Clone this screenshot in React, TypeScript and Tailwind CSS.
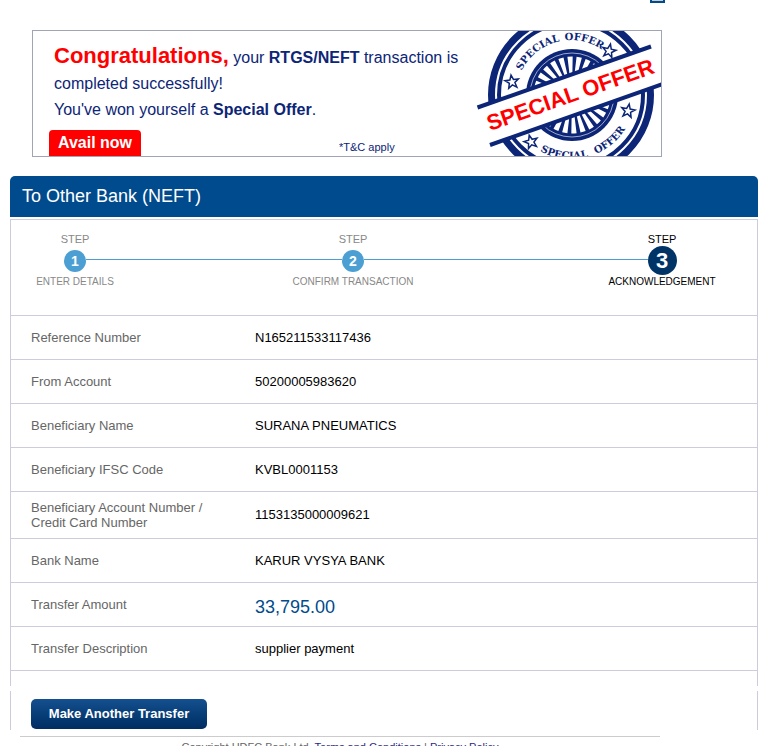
const details = [
  { label: 'Reference Number', value: 'N165211533117436' },
  { label: 'From Account', value: '50200005983620' },
  { label: 'Beneficiary Name', value: 'SURANA PNEUMATICS' },
  { label: 'Beneficiary IFSC Code', value: 'KVBL0001153' },
  { label: 'Beneficiary Account Number / Credit Card Number', value: '1153135000009621', tall: true },
  { label: 'Bank Name', value: 'KARUR VYSYA BANK' },
  { label: 'Transfer Amount', value: '33,795.00', amount: true },
  { label: 'Transfer Description', value: 'supplier payment' },
];

const steps = [
  { number: 1, label: 'ENTER DETAILS' },
  { number: 2, label: 'CONFIRM TRANSACTION' },
  { number: 3, label: 'ACKNOWLEDGEMENT' },
];

const starPoints = '0,-7 1.8,-2.3 6.7,-2.2 2.8,0.9 4.1,5.7 0,2.9 -4.1,5.7 -2.8,0.9 -6.7,-2.2 -1.8,-2.3';

function SpecialOfferStamp() {
  return (
    <svg viewBox="475 31 186 125" className="h-[125px] w-[186px] shrink-0" role="img" aria-label="Special offer stamp">
      <defs>
        <path id="arcTop" d="M 516 95 A 55 55 0 0 1 626 95" />
        <path id="arcBottom" d="M 507 95 A 64 64 0 0 0 635 95" />
      </defs>
      <g fill="none" stroke="#0c2577">
        <circle cx="571" cy="95" r="79.5" strokeWidth="7" />
        <circle cx="571" cy="95" r="72" strokeWidth="4" />
      </g>
      <circle cx="572" cy="95" r="46" fill="#0c2577" />
      <circle cx="572" cy="95" r="42" fill="none" stroke="#fff" strokeWidth="0.6" />
      <circle cx="572" cy="95" r="28" fill="none" stroke="#fff" strokeWidth="21" pathLength="52" strokeDasharray="1.15 0.85" />
      <g fill="#0c2577" fontFamily="'DejaVu Serif', serif" fontWeight="bold" fontSize="10">
        <text>
          <textPath href="#arcTop" startOffset="25">SPECIAL</textPath>
        </text>
        <text>
          <textPath href="#arcTop" startOffset="80">OFFER</textPath>
        </text>
        <text>
          <textPath href="#arcBottom" startOffset="68">SPECIAL</textPath>
        </text>
        <text>
          <textPath href="#arcBottom" startOffset="126">OFFER</textPath>
        </text>
      </g>
      <g fill="#fff" stroke="#0c2577" strokeWidth="1.5">
        <polygon points={starPoints} transform="translate(512 82) rotate(-8)" />
        <polygon points={starPoints} transform="translate(609 51) rotate(12)" />
        <polygon points={starPoints} transform="translate(531 142) rotate(-15)" />
        <polygon points={starPoints} transform="translate(628 111) rotate(10)" />
      </g>
      <polygon points="477,107.5 651,46.5 663,47 663,84 490,145" fill="#fff" />
      <g stroke="#0c2577" strokeWidth="4">
        <line x1="477.5" y1="107.5" x2="651" y2="46.5" />
        <line x1="490" y1="145" x2="663" y2="84" />
      </g>
      <text
        transform="translate(490 131) rotate(-19.4)"
        fill="#f00"
        fontFamily="'Liberation Sans', Arial, sans-serif"
        fontWeight="bold"
        fontSize="22"
      >
        SPECIAL OFFER
      </text>
    </svg>
  );
}

function OfferBanner() {
  return (
    <section className="ml-[22px] flex h-[127px] w-[630px] justify-between overflow-hidden border border-[#a0a4b4] text-[#0c2577]">
      <div className="flex flex-col">
        <p className="mt-3 ml-[21px] text-base leading-[26px] whitespace-nowrap">
          <strong className="text-[22px] text-[#f00]">Congratulations,</strong> your <strong>RTGS/NEFT</strong> transaction is
          <br />
          completed successfully!
          <br />
          You've won yourself a <strong>Special Offer</strong>.
        </p>
        <div className="mt-auto flex items-start">
          <button type="button" className="ml-4 h-[26px] w-[92px] rounded-t-[4px] bg-[#f00] text-base font-bold text-white">
            Avail now
          </button>
          <span className="ml-[198px] pt-2 text-[11px] leading-[18px]">*T&amp;C apply</span>
        </div>
      </div>
      <SpecialOfferStamp />
    </section>
  );
}

function StepTracker() {
  return (
    <ol className="grid h-[95px] grid-cols-[128px_1fr_190px] pt-[13px] text-center text-[#888]">
      {steps.map((step, i) => {
        const current = step.number === 3;
        return (
          <li key={step.number} className={current ? 'text-black' : ''}>
            <div className="h-[13px] text-[11px] leading-3">STEP</div>
            <div className="flex h-[30px]">
              <span className={`mt-[13px] h-px flex-1 ${i > 0 ? 'bg-[#4c9fd2]' : ''}`} />
              <span
                className={`flex items-center justify-center rounded-full font-bold text-white ${
                  current ? 'size-[29px] bg-[#003366] text-[22px]' : 'mt-1 size-[22px] bg-[#4c9fd2] text-sm'
                }`}
              >
                {step.number}
              </span>
              <span className={`mt-[13px] h-px flex-1 ${i < 2 ? 'bg-[#4c9fd2]' : ''}`} />
            </div>
            <div className="text-[10px] leading-3">{step.label}</div>
          </li>
        );
      })}
    </ol>
  );
}

export default function App() {
  return (
    <div className="h-screen overflow-hidden bg-white pr-[15px] pl-[10px] font-['Liberation_Sans',Arial,sans-serif] text-[13px] text-black">
      <div className="flex h-[30px] pl-[640px]">
        <span className="h-[3px] w-[15px] border-2 border-t-0 border-[#004b8d] bg-[#ccc]" />
      </div>
      <OfferBanner />
      <h1 className="mt-[19px] h-[41px] rounded-t-[5px] bg-[#004b8d] pl-3 text-lg leading-[40px] text-white">
        To Other Bank (NEFT)
      </h1>
      <main>
        <section className="mt-[2px] border-x border-t border-[#ccccdd] pb-[15px]">
          <StepTracker />
          <table className="w-full">
            <tbody>
              {details.map((row) => (
                <tr key={row.label} className={`border-[#ccccdd] first:border-t border-b ${row.tall ? 'h-[47px]' : 'h-11'}`}>
                  <th scope="row" className="w-[244px] pr-10 pl-5 text-left leading-[15px] font-normal text-[#666]">
                    {row.label}
                  </th>
                  <td className={row.amount ? 'pt-1 text-lg text-[#004b8d]' : ''}>{row.value}</td>
                </tr>
              ))}
            </tbody>
          </table>
        </section>
        <div className="mt-[5px] flex h-[39px] items-start border-x border-[#ccccdd] pt-2 pl-5">
          <button
            type="button"
            className="h-[30px] w-[176px] rounded-[5px] bg-linear-to-b from-[#14508f] to-[#002d62] text-[13px] font-bold text-white"
          >
            Make Another Transfer
          </button>
        </div>
      </main>
      <footer className="mt-[6px] ml-[10px] w-[640px] border-t border-[#ccc] pt-[3px] text-center text-[11px] leading-[14px] text-[#666]">
        Copyright HDFC Bank Ltd.{' '}
        <a href="#terms" className="text-[#2a2a86]">
          Terms and Conditions
        </a>{' '}
        |{' '}
        <a href="#privacy" className="text-[#2a2a86]">
          Privacy Policy
        </a>
      </footer>
    </div>
  );
}
